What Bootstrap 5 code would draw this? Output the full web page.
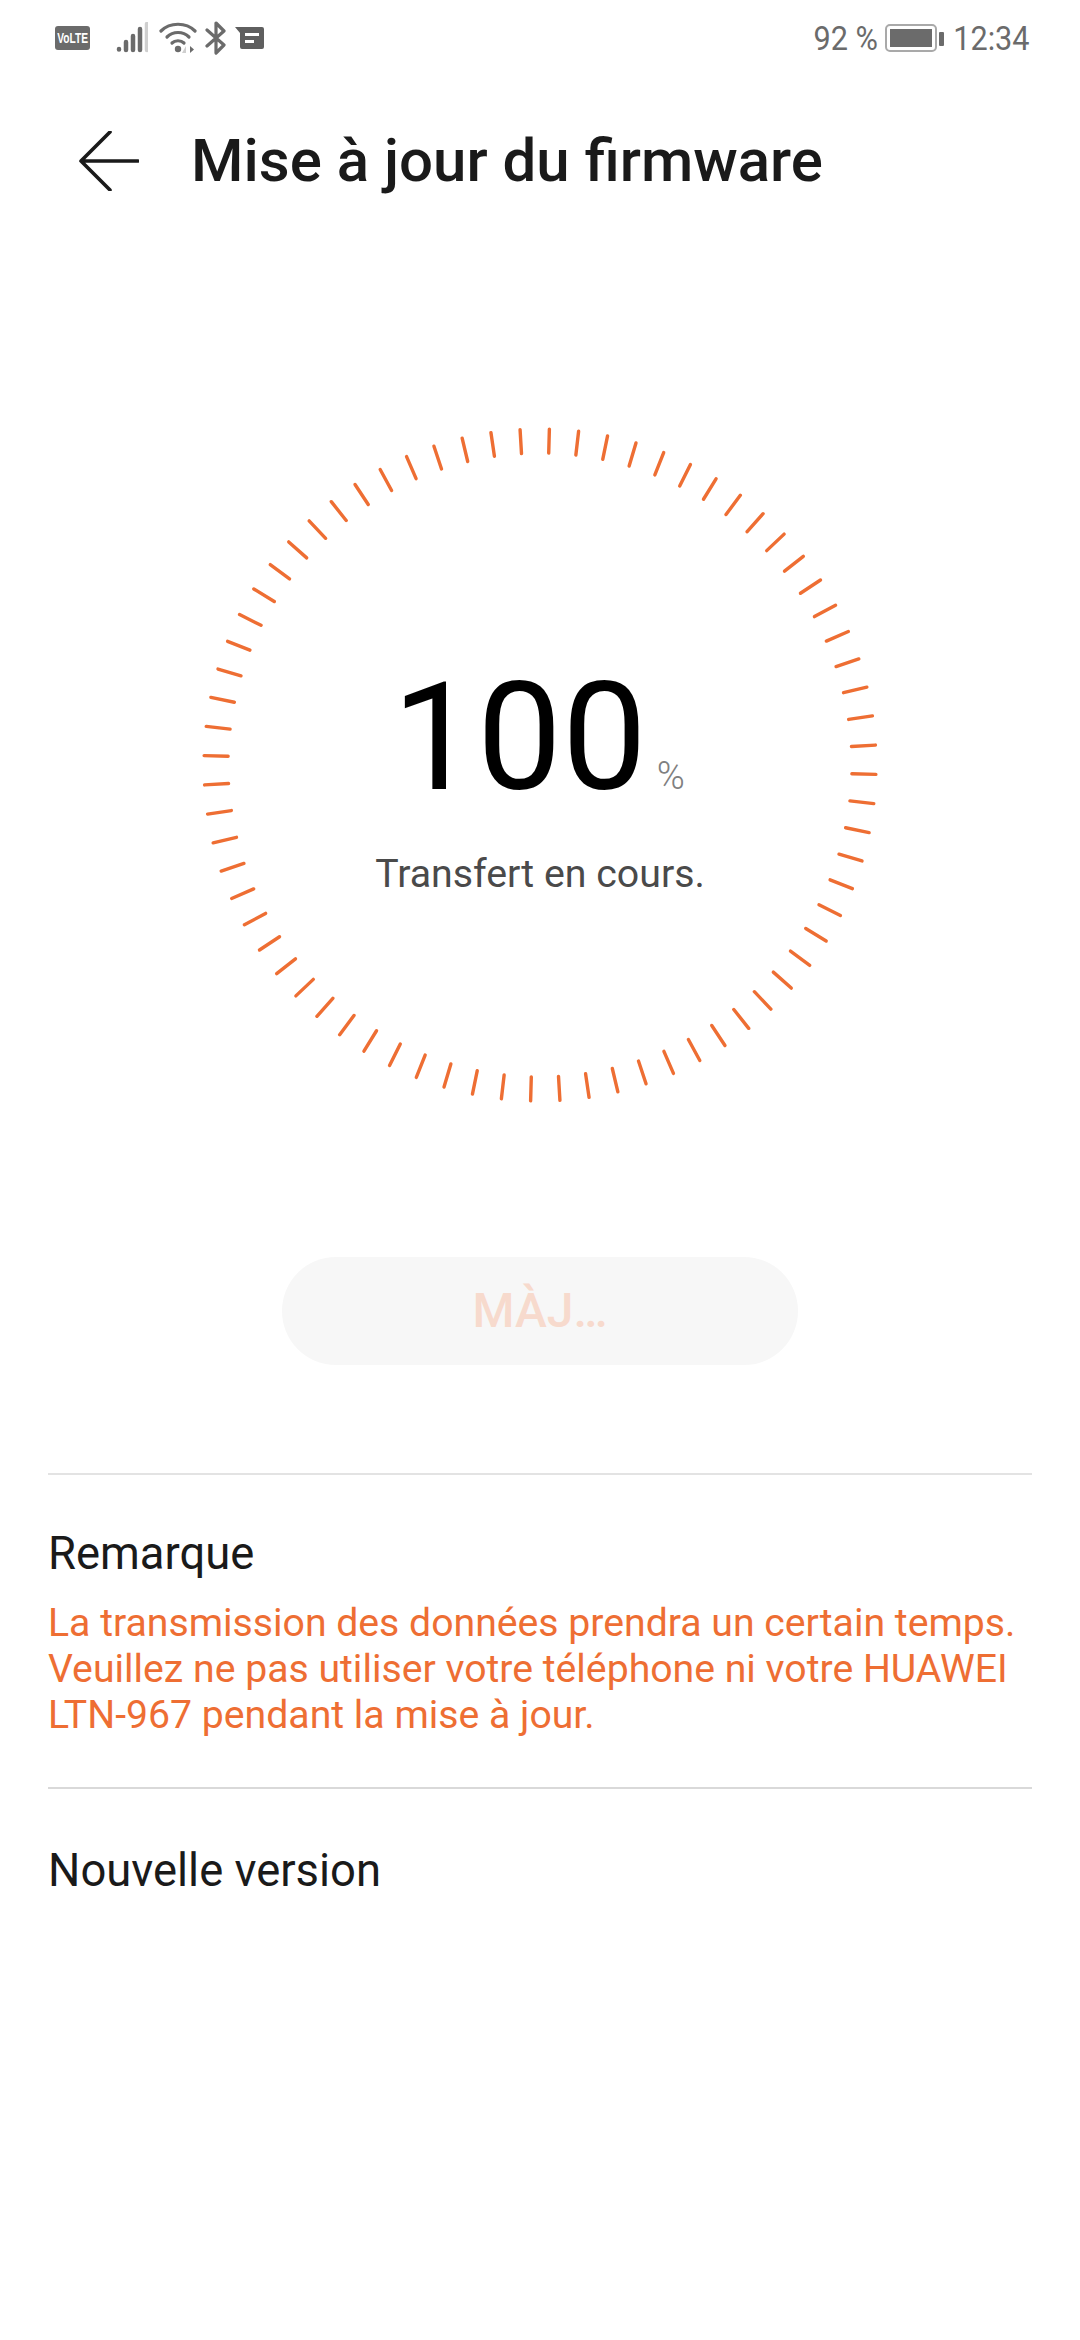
<!doctype html>
<html lang="fr">

<head>
  <meta charset="utf-8" />
  <meta name="viewport" content="width=device-width, initial-scale=1" />
  <title>Mise à jour du firmware</title>
  <link href="https://cdn.jsdelivr.net/npm/bootstrap@5.3.5/dist/css/bootstrap.min.css" rel="stylesheet" />
  <style>
    body {
      background-color: #fff;
      font-family: Roboto, "Liberation Sans", sans-serif;
      width: 1080px;
      height: 2340px;
      overflow: hidden;
    }

    .status-bar {
      height: 76px;
      padding: 0 46px 0 55px;
      color: #6b6b6b;
    }

    .status-text {
      font-size: 34px;
      line-height: 1;
      display: inline-block;
      transform: scaleX(0.9);
    }

    .volte-tag {
      width: 35px;
      height: 24px;
      background-color: #6b6b6b;
      color: #fff;
      border-radius: 3px;
      font-family: "Liberation Sans", sans-serif;
      font-size: 15px;
      font-weight: 700;
      line-height: 24px;
      text-align: center;
      white-space: nowrap;
    }

    .volte-tag span {
      display: inline-block;
      transform: scaleX(0.68);
      transform-origin: 50% 50%;
      margin: 0 -8px;
    }

    .wifi-icon {
      margin-left: 11px;
    }

    .title-row {
      height: 170px;
      padding-left: 79px;
      gap: 52px;
    }

    .page-title {
      font-size: 60px;
      font-weight: 500;
      color: #1a1a1a;
      margin: 0;
    }

    .dial-box {
      width: 680px;
      height: 680px;
      margin-top: 179px;
    }

    .dial-center {
      padding-top: 36px;
    }

    .dial-group {
      margin-right: 3px;
    }

    .dial-number {
      font-size: 151px;
      line-height: 1;
      color: #000;
    }

    .dial-unit {
      font-size: 38px;
      font-weight: 300;
      color: #808080;
      margin-left: 10px;
    }

    .dial-label {
      font-size: 39.3px;
      color: #4a4a4a;
      margin-top: 32px;
    }

    .update-btn {
      width: 516px;
      height: 108px;
      margin-top: 152px;
      background-color: #f7f7f7;
      border: 0;
      border-radius: 54px;
      color: #f7dacd;
      font-size: 48px;
      font-weight: 500;
    }

    .info-block {
      margin: 0 48px;
      padding-top: 51px;
    }

    .info-block-low {
      padding-top: 54px;
    }

    .info-title {
      font-size: 45.4px;
      font-weight: 400;
      color: #1a1a1a;
      line-height: 56px;
      margin: 0;
    }

    .info-text {
      font-size: 39.2px;
      line-height: 46px;
      color: #ee6e33;
      margin: 18px 0 0;
    }

    .rule-line {
      height: 2px;
      margin: 0 48px;
    }

    .rule-first {
      background-color: #e3e3e3;
      margin-top: 108px;
    }

    .rule-second {
      background-color: #d9d9d9;
      margin-top: 49px;
    }
  </style>
</head>

<body>
  <div class="status-bar d-flex align-items-center justify-content-between">
    <div class="d-flex align-items-center">
      <div class="volte-tag"><span>VoLTE</span></div>
      <svg class="ms-4" width="34" height="32" viewBox="0 0 34 32">
        <g stroke-width="4.5" stroke-linecap="round" fill="none">
          <path d="M5 27v.5M12 20v8M19 14v14M26 7v21" stroke="#6b6b6b" />
          <path d="M33 2v26" stroke="#cfcfcf" />
        </g>
      </svg>
      <svg class="wifi-icon" width="38" height="32" viewBox="0 0 38 32">
        <g fill="none" stroke="#6b6b6b" stroke-width="3.2" stroke-linecap="round">
          <path d="M2 9C11 0 27 0 36 9" />
          <path d="M8 15c6-6 16-6 22 0" />
          <path d="M13 21c3-3 9-3 12 0" />
        </g>
        <circle cx="19" cy="27" r="3.2" fill="#6b6b6b" />
        <path d="M27 31v-7l-4 7z" fill="#cfcfcf" />
        <path d="M31 24v7l4-3.5z" fill="#6b6b6b" />
      </svg>
      <svg class="ms-2" width="22" height="34" viewBox="0 0 22 34">
        <path d="M2 9l17 15-8 8V2l8 8L2 25" fill="none" stroke="#6b6b6b" stroke-width="3.2" stroke-linecap="round" stroke-linejoin="round" />
      </svg>
      <svg class="ms-2" width="30" height="24" viewBox="0 0 30 24">
        <path d="M0 1h27a2 2 0 0 1 2 2v18a2 2 0 0 1-2 2H7a2 2 0 0 1-2-2V7z" fill="#5f5f5f" />
        <path d="M10 7h14v3H10zM10 14h9v3h-9z" fill="#fff" />
      </svg>
    </div>
    <div class="d-flex align-items-center">
      <span class="status-text">92 %</span>
      <svg class="mx-1" width="60" height="30" viewBox="0 0 60 30">
        <rect x="1" y="2" width="50" height="26" rx="4" fill="none" stroke="#a9a9a9" stroke-width="2" />
        <rect x="5" y="6" width="42" height="18" fill="#6b6b6b" />
        <rect x="54" y="9" width="5" height="14" rx="1" fill="#6b6b6b" />
      </svg>
      <span class="status-text">12:34</span>
    </div>
  </div>

  <div class="title-row d-flex align-items-center">
    <svg width="60" height="60" viewBox="0 0 60 60">
      <path d="M31 1L2 30l29 29M2 30h57" fill="none" stroke="#1a1a1a" stroke-width="3.6" stroke-linecap="round" stroke-linejoin="round" />
    </svg>
    <h1 class="page-title">Mise à jour du firmware</h1>
  </div>

  <div class="dial-box position-relative mx-auto">
    <svg id="dial" width="680" height="680" viewBox="0 0 680 680"></svg>
    <div class="dial-center position-absolute top-0 start-0 w-100 h-100 d-flex flex-column align-items-center justify-content-center">
      <div class="dial-group d-flex align-items-baseline">
        <span class="dial-number">100</span><span class="dial-unit">%</span>
      </div>
      <div class="dial-label">Transfert en cours.</div>
    </div>
  </div>

  <div class="d-flex justify-content-center">
    <button class="update-btn" type="button">MÀJ…</button>
  </div>

  <div class="rule-line rule-first"></div>
  <div class="info-block">
    <h2 class="info-title">Remarque</h2>
    <p class="info-text">La transmission des données prendra un certain temps. Veuillez ne pas utiliser votre téléphone ni votre HUAWEI LTN-967 pendant la mise à jour.</p>
  </div>
  <div class="rule-line rule-second"></div>
  <div class="info-block info-block-low">
    <h2 class="info-title">Nouvelle version</h2>
  </div>

  <script>
    // 72 ticks, 5 degrees apart, first one just right of 12 o'clock
    const dial = document.getElementById("dial");
    for (let i = 0; i < 72; i++) {
      const a = (1.6 + i * 5) * Math.PI / 180;
      const line = document.createElementNS("http://www.w3.org/2000/svg", "line");
      line.setAttribute("x1", 340 + 312 * Math.sin(a));
      line.setAttribute("y1", 340 - 312 * Math.cos(a));
      line.setAttribute("x2", 340 + 336 * Math.sin(a));
      line.setAttribute("y2", 340 - 336 * Math.cos(a));
      line.setAttribute("stroke", "#ee6e33");
      line.setAttribute("stroke-width", "3.4");
      line.setAttribute("stroke-linecap", "round");
      dial.appendChild(line);
    }
  </script>
  <script src="https://cdn.jsdelivr.net/npm/bootstrap@5.3.5/dist/js/bootstrap.bundle.min.js"></script>
</body>

</html>
